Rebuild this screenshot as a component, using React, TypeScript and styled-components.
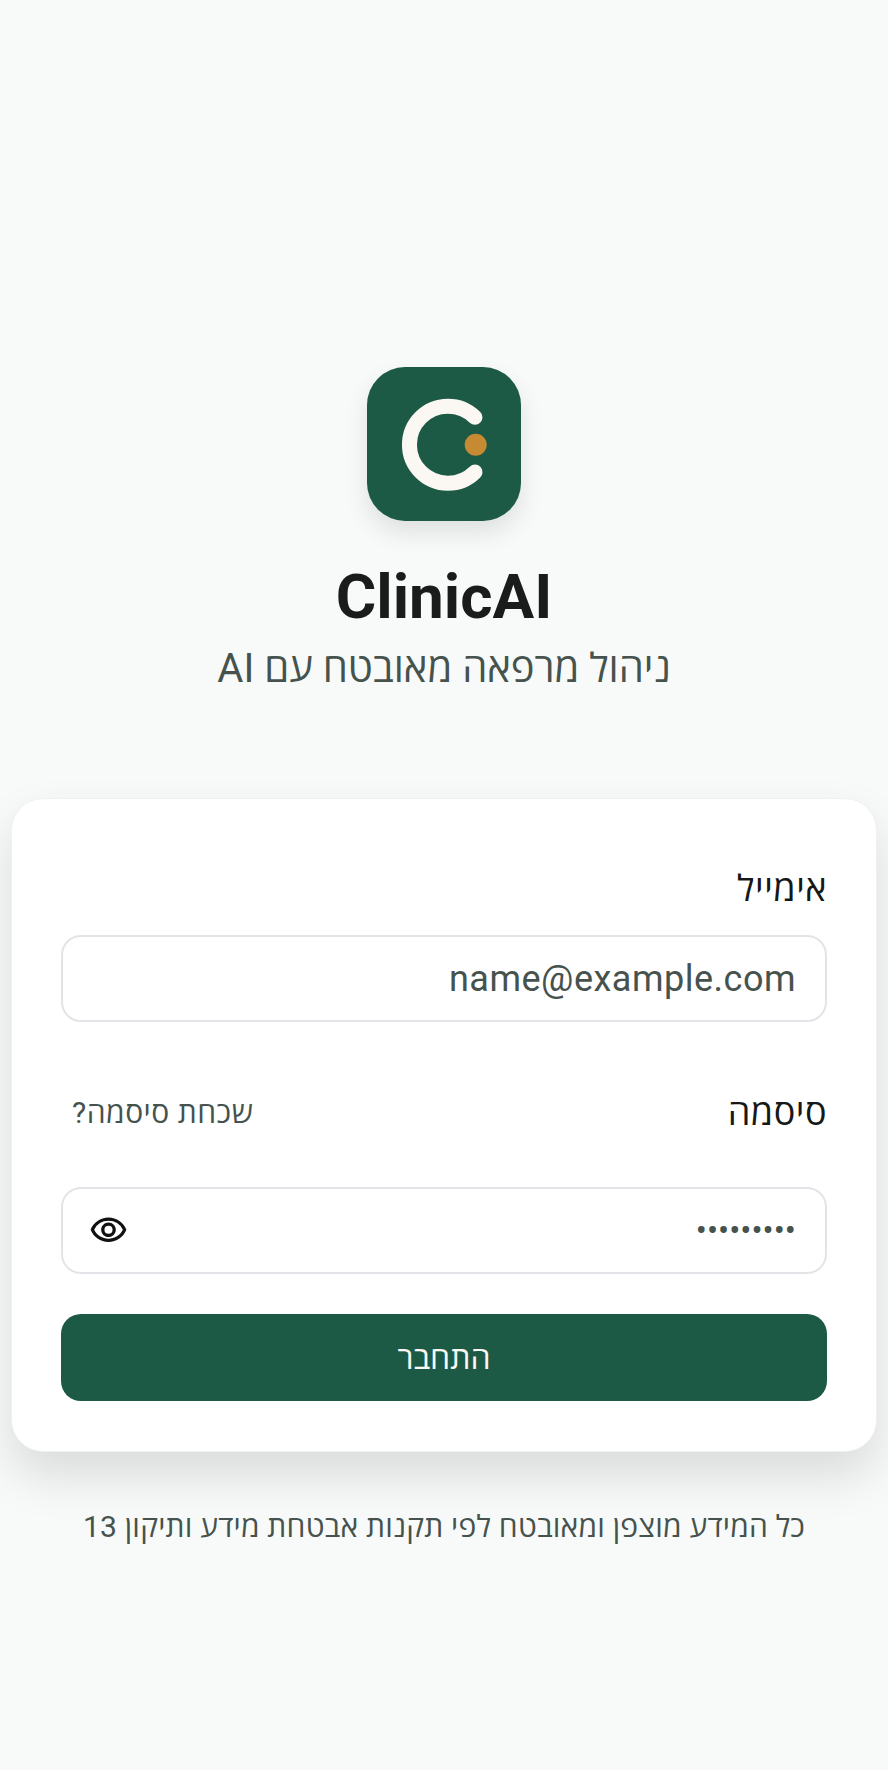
import React from 'react';
import styled, { createGlobalStyle } from 'styled-components';
import { MdOutlineVisibility } from 'react-icons/md';

const GlobalStyle = createGlobalStyle`
  html, body {
    margin: 0;
    padding: 0;
    background: #f7faf8;
  }
  * {
    box-sizing: border-box;
  }
`;

const Page = styled.div`
  direction: rtl;
  min-height: 1770px;
  padding: 367px 11px 0;
  display: flex;
  flex-direction: column;
  align-items: center;
  font-family: Roboto, "Open Sans", sans-serif;
  background: #f7faf8;
`;

const LogoTile = styled.div`
  width: 154px;
  height: 154px;
  border-radius: 38px;
  background: #1c5a46;
  box-shadow: 0 12px 24px rgba(0, 0, 0, 0.1);
  display: flex;
`;

const Title = styled.h1`
  margin: 38px 0 0;
  font-size: 62px;
  line-height: 76px;
  font-weight: 700;
  color: #1a1c1b;
`;

const Subtitle = styled.p`
  margin: 10px 0 0;
  font-size: 40px;
  line-height: 48px;
  font-weight: 400;
  color: #46524e;
`;

const Card = styled.form`
  align-self: stretch;
  margin-top: 105px;
  height: 654px;
  padding: 60px 49px 0;
  background: #fff;
  border: 1px solid #f0f0f2;
  border-radius: 32px;
  box-shadow: 0 24px 48px rgba(0, 0, 0, 0.12);
`;

const Field = styled.div`
  margin-bottom: 43px;
`;

const LabelRow = styled.div`
  height: 96px;
  display: flex;
  align-items: center;
  justify-content: space-between;
  margin-bottom: 26px;
`;

const Label = styled.label<{ $block?: boolean }>`
  display: block;
  font-size: 36px;
  line-height: 60px;
  letter-spacing: 0.5px;
  color: #161817;
  margin-bottom: ${({ $block }) => ($block ? '16px' : '0')};
`;

const ForgotLink = styled.a`
  font-size: 30px;
  line-height: 40px;
  letter-spacing: 0.5px;
  color: #46524e;
  padding: 0 11px;
  text-decoration: none;
`;

const InputBox = styled.div`
  height: 87px;
  display: flex;
  align-items: center;
  padding: 0 29px 0 26px;
  background: #fff;
  border: 2px solid #e6e3e8;
  border-radius: 20px;
`;

const TextInput = styled.input<{ $small?: boolean }>`
  flex: 1;
  min-width: 0;
  border: 0;
  outline: 0;
  padding: 0;
  background: transparent;
  font-family: inherit;
  font-size: ${({ $small }) => ($small ? '33px' : '36px')};
  letter-spacing: ${({ $small }) => ($small ? '0' : '0.5px')};
  color: #46524e;
  &::placeholder {
    color: #46524e;
    opacity: 1;
  }
`;

const EyeButton = styled.button`
  display: flex;
  padding: 0;
  border: 0;
  background: none;
  color: #111;
`;

const SubmitButton = styled.button`
  display: block;
  width: 100%;
  height: 87px;
  margin-top: 40px;
  padding: 0 0 3px;
  border: 0;
  border-radius: 20px;
  background: #1c5a46;
  color: #fbf8f4;
  font-family: inherit;
  font-size: 32px;
  font-weight: 500;
`;

const Footnote = styled.p`
  margin: 55px 0 0;
  font-size: 30px;
  line-height: 40px;
  letter-spacing: 0.2px;
  color: #46524e;
`;

function Logo() {
  return (
    <svg width="154" height="154" viewBox="0 0 154 154">
      <path
        d="M108 50.3A38.5 38.5 0 1 0 108 105.1"
        fill="none"
        stroke="#fbf8f4"
        strokeWidth="15"
        strokeLinecap="round"
      />
      <circle cx="108.7" cy="77.7" r="11" fill="#c68a33" />
    </svg>
  );
}

export default function App() {
  return (
    <Page>
      <GlobalStyle />
      <LogoTile>
        <Logo />
      </LogoTile>
      <Title>ClinicAI</Title>
      <Subtitle>ניהול מרפאה מאובטח עם AI</Subtitle>
      <Card>
        <Field>
          <Label $block htmlFor="email">אימייל</Label>
          <InputBox>
            <TextInput id="email" type="email" placeholder="name@example.com" />
          </InputBox>
        </Field>
        <LabelRow>
          <Label htmlFor="password">סיסמה</Label>
          <ForgotLink href="#">שכחת סיסמה?</ForgotLink>
        </LabelRow>
        <InputBox>
          <TextInput $small id="password" type="password" defaultValue="123456789" />
          <EyeButton type="button">
            <MdOutlineVisibility size={39} />
          </EyeButton>
        </InputBox>
        <SubmitButton type="button">התחבר</SubmitButton>
      </Card>
      <Footnote>כל המידע מוצפן ומאובטח לפי תקנות אבטחת מידע ותיקון 13</Footnote>
    </Page>
  );
}
